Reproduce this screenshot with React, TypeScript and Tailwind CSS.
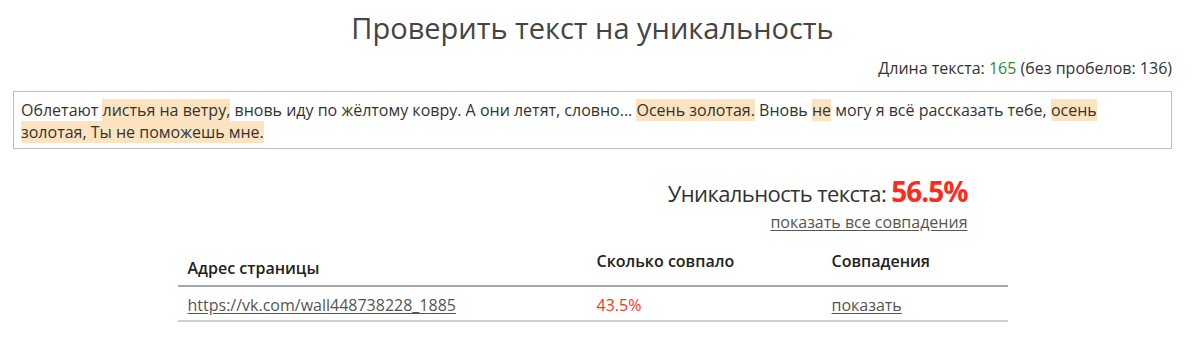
import React from "react"

const hl = "bg-[#fde3bf]"

const parts: { text: string; match?: boolean }[] = [
  { text: "Облетают " },
  { text: "листья на ветру,", match: true },
  { text: " вновь иду по жёлтому ковру. А они летят, словно... " },
  { text: "Осень золотая.", match: true },
  { text: " Вновь " },
  { text: "не", match: true },
  { text: " могу я всё рассказать тебе, " },
  { text: "осень золотая, Ты не поможешь мне.", match: true },
]

const rows = [{ url: "https://vk.com/wall448738228_1885", percent: "43.5%" }]

export default function App() {
  return (
    <div className="min-h-screen bg-white pl-[13px] pr-[28px] font-['Open_Sans',sans-serif] text-[#333]">
      <h1 className="pt-[10px] text-center text-[29px] leading-[36px] font-normal text-[#444]">
        Проверить текст на уникальность
      </h1>

      <div className="mt-[10px] text-right text-[16px] leading-[24px] text-[#333]">
        Длина текста: <span className="text-[#2e8b2e]">165</span> (без пробелов: 136)
      </div>

      <div className="mt-[11px] border border-[#bcc0c4] px-[7px] pt-[7px] pb-[5px] text-[16px] leading-[22px] text-[#333]">
        {parts.map((p, i) =>
          p.match ? (
            <span key={i} className={hl}>
              {p.text}
            </span>
          ) : (
            <span key={i}>{p.text}</span>
          )
        )}
      </div>

      <div className="mx-auto mt-[25px] w-[750px] text-right">
        <div className="text-[22px] leading-[34px] tracking-[-0.6px] text-[#333]">
          Уникальность текста:{" "}
          <span className="text-[28px] font-bold tracking-[-1px] text-[#ff2a1a]">56.5%</span>
        </div>
        <a href="#" className="text-[16px] leading-[24px] text-[#555] underline underline-offset-2">
          показать все совпадения
        </a>
      </div>

      <div className="mx-auto mt-[15px] w-[830px] text-[16px] leading-[24px]">
        <div className="grid grid-cols-[409px_235px_1fr] items-end border-b-2 border-[#a4a8ac] font-semibold text-[#222]">
          <div className="px-[10px] pb-[5px]">Адрес страницы</div>
          <div className="px-[10px] pb-[12px]">Сколько совпало</div>
          <div className="px-[10px] pb-[12px]">Совпадения</div>
        </div>
        {rows.map((r) => (
          <div
            key={r.url}
            className="grid grid-cols-[409px_235px_1fr] border-b-2 border-[#cdd0d3]"
          >
            <div className="px-[10px] pt-[6px] pb-[3px]">
              <a href="#" className="text-[#555] underline underline-offset-2">
                {r.url}
              </a>
            </div>
            <div className="px-[10px] pt-[6px] pb-[3px] text-[#ff3322]">{r.percent}</div>
            <div className="px-[10px] pt-[6px] pb-[3px]">
              <a href="#" className="text-[#555] underline underline-offset-2">
                показать
              </a>
            </div>
          </div>
        ))}
      </div>
    </div>
  )
}
